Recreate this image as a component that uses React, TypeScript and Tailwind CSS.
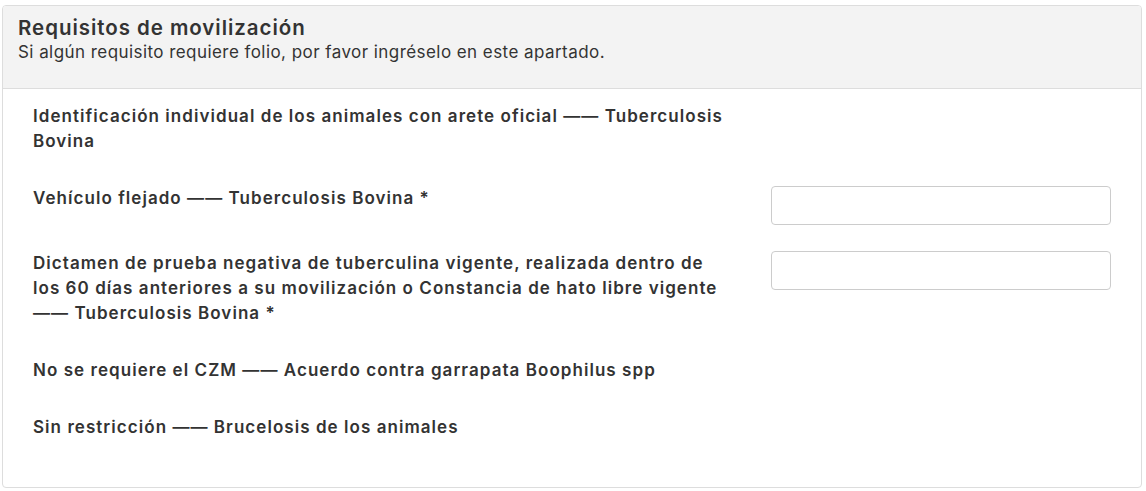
import React from 'react';

const rows: { label: string; input: boolean }[] = [
  {
    label: 'Identificación individual de los animales con arete oficial —— Tuberculosis Bovina',
    input: false,
  },
  { label: 'Vehículo flejado —— Tuberculosis Bovina *', input: true },
  {
    label:
      'Dictamen de prueba negativa de tuberculina vigente, realizada dentro de los 60 días anteriores a su movilización o Constancia de hato libre vigente —— Tuberculosis Bovina *',
    input: true,
  },
  { label: 'No se requiere el CZM —— Acuerdo contra garrapata Boophilus spp', input: false },
  { label: 'Sin restricción —— Brucelosis de los animales', input: false },
];

const App = () => {
  return (
    <div className="min-h-screen bg-white pt-[5px] px-[2px] font-['Inter',sans-serif] text-[#333]">
      <div className="w-[1140px] border border-[#dddddd] rounded-[4px] overflow-hidden">
        {/* Header */}
        <div className="bg-[#f3f3f3] border-b border-[#dddddd] px-[15px] pt-[10px] pb-[24px]">
          <h3 className="text-[20.5px] leading-[24px] font-semibold tracking-[0.95px]">Requisitos de movilización</h3>
          <p className="text-[17px] leading-[24px] tracking-[0.44px]">
            Si algún requisito requiere folio, por favor ingréselo en este apartado.
          </p>
        </div>

        {/* Body */}
        <div className="p-[15px]">
          {rows.map((row, i) => (
            <div key={i} className="grid grid-cols-3 mb-[26px]">
              <div className="col-span-2 pl-[15px] pr-[25px] pb-[6px]">
                <label className="block text-[17px] leading-[25px] font-semibold tracking-[1.05px]">{row.label}</label>
              </div>
              <div className="pl-[14px] pr-[15px]">
                {row.input && (
                  <input
                    type="text"
                    className="block w-full h-[39px] border border-[#cccccc] rounded-[4px] px-3 bg-white"
                  />
                )}
              </div>
            </div>
          ))}
        </div>
      </div>
    </div>
  );
};

export default App;
